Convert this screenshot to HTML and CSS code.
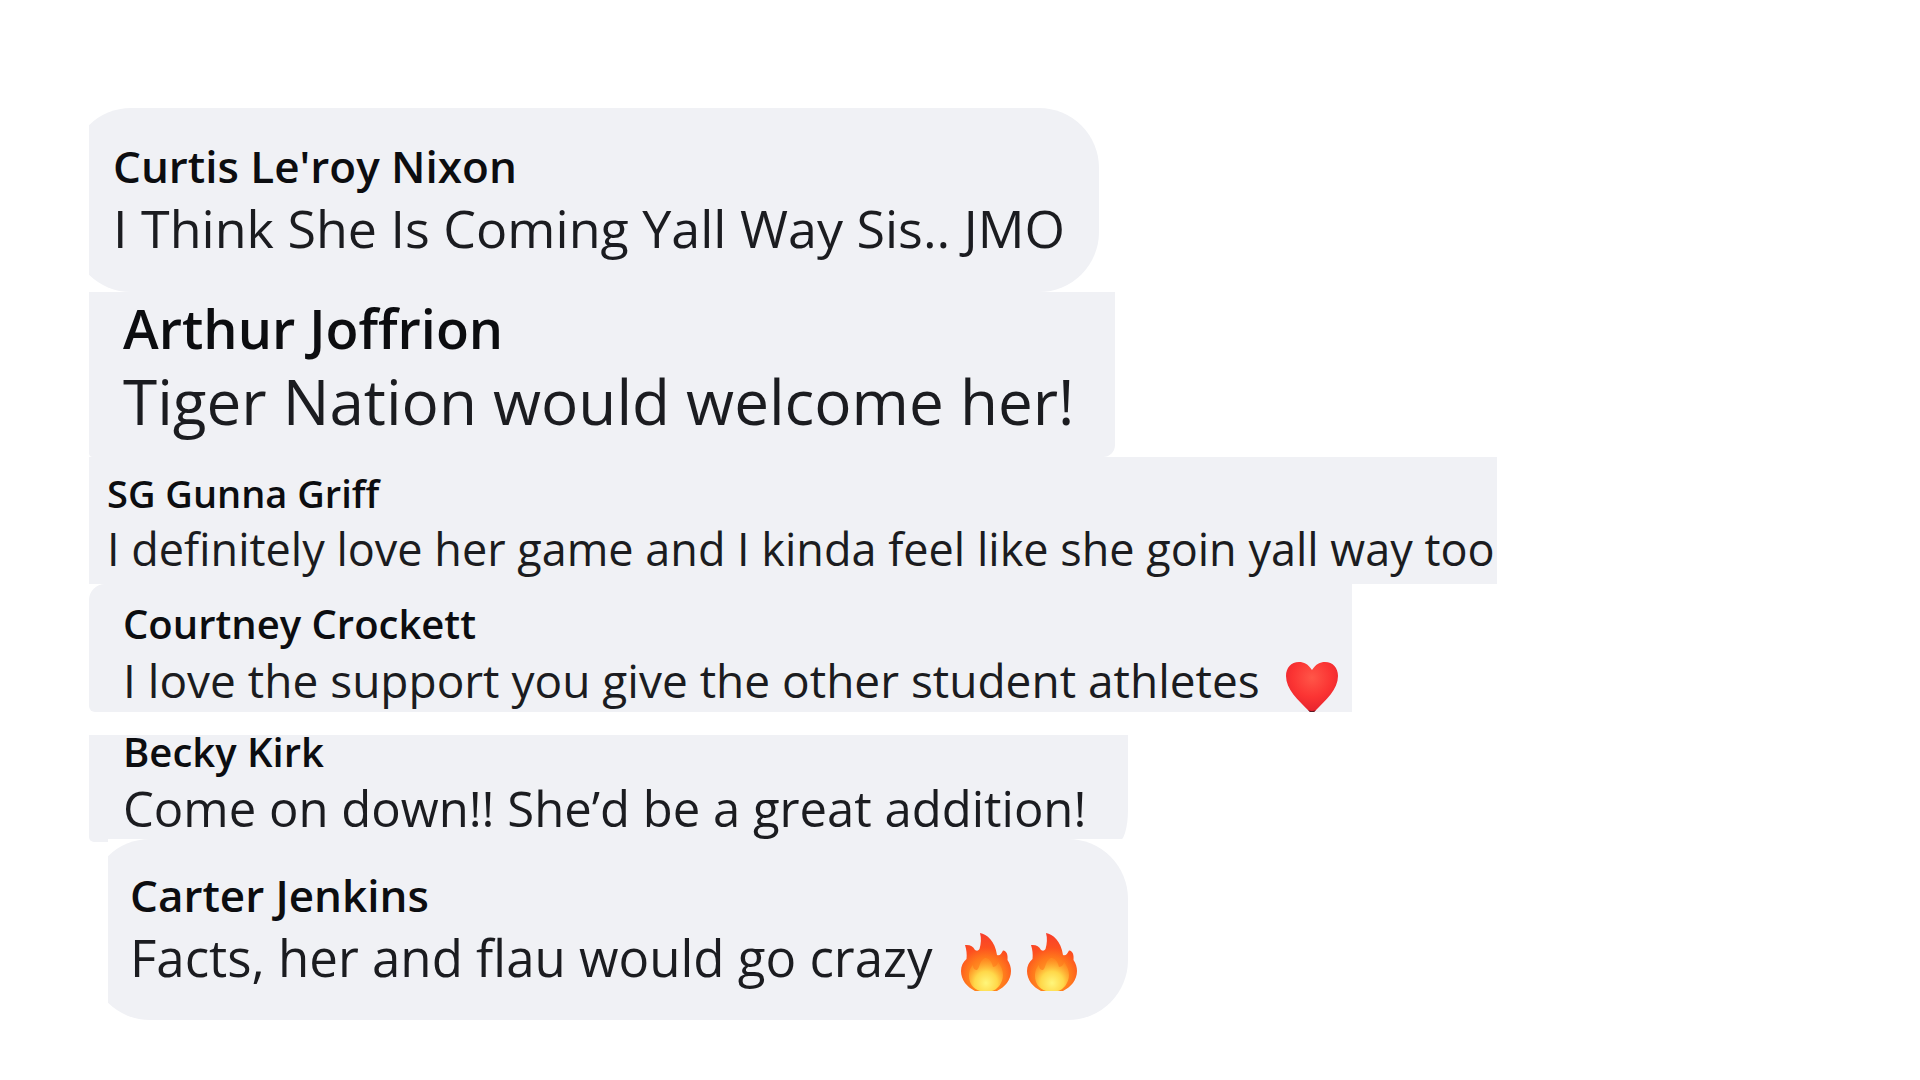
FILE: index.html
```html
<!DOCTYPE html>
<html lang="en">
<head>
<meta charset="utf-8">
<title>Comments</title>
<link rel="stylesheet" href="styles.css">
</head>
<body>
<svg class="defs" width="0" height="0" aria-hidden="true">
  <defs>
    <radialGradient id="heartFill" cx="50%" cy="30%" r="75%">
      <stop offset="0" stop-color="#ff5648"/>
      <stop offset="0.5" stop-color="#fb3433"/>
      <stop offset="1" stop-color="#e01d2b"/>
    </radialGradient>
    <radialGradient id="flameOuter" gradientUnits="userSpaceOnUse" cx="25" cy="44" r="42">
      <stop offset="0" stop-color="#ffb02e"/>
      <stop offset="0.45" stop-color="#ff7a1c"/>
      <stop offset="0.7" stop-color="#fd501f"/>
      <stop offset="1" stop-color="#f8402a"/>
    </radialGradient>
    <radialGradient id="flameInner" gradientUnits="userSpaceOnUse" cx="25" cy="50" r="23">
      <stop offset="0" stop-color="#fff67a"/>
      <stop offset="0.5" stop-color="#ffd84a"/>
      <stop offset="1" stop-color="#ffa52c" stop-opacity="0.3"/>
    </radialGradient>
    <symbol id="flame" viewBox="0 0 50 58">
      <path fill="url(#flameOuter)" d="M19 0C26 1 34 8 36 22C39 23 40 21 42 17.500C46 18 47 22 46.500 27C49 31 50 34 50 38C50 47 44 54 36 58H14C6 54 0 47 0 38C0 33 2 29 5.500 26C6 21 5.500 17 4 12C9 11.500 12 13 14 17C16 18 17 18 18.500 16C20 11 20.500 5 19 0Z"/>
      <path fill="url(#flameInner)" d="M24 25C28 25 31 29 32 34C35 34 37 31 37 29C40 33 42 37 42 42C42 50 36 57 31 58H19C12 56 8 50 8 43C8 37 10 34 12 32C12 36 14 37 16 37C19 35 18 28 24 25Z"/>
    </symbol>
  </defs>
</svg>
<main class="thread">
  <article class="comment comment-curtis">
    <div class="bubble">
      <h2 class="name">Curtis Le'roy Nixon</h2>
      <p class="text">I Think She Is Coming Yall Way Sis.. JMO</p>
    </div>
  </article>
  <article class="comment comment-arthur">
    <div class="bubble">
      <h2 class="name">Arthur Joffrion</h2>
      <p class="text">Tiger Nation would welcome her!</p>
    </div>
  </article>
  <article class="comment comment-griff">
    <div class="bubble">
      <h2 class="name">SG Gunna Griff</h2>
      <p class="text">I definitely love her game and I kinda feel like she goin yall way too</p>
    </div>
  </article>
  <article class="comment comment-courtney">
    <div class="bubble">
      <h2 class="name">Courtney Crockett</h2>
      <p class="text">I love the support you give the other student athletes
        <svg class="heart" viewBox="0 0 52 52" role="img" aria-label="red heart"><path fill="url(#heartFill)" d="M26 8C22 2 18 0 13 0C5 0 0 6 0 14C0 28 13 39 26 52C39 39 52 28 52 14C52 6 47 0 39 0C34 0 30 2 26 8Z"/><path fill="#5a1a26" d="M22 48L26 52L30 48Q26 50 22 48Z"/></svg></p>
    </div>
  </article>
  <article class="comment comment-becky">
    <div class="bubble">
      <h2 class="name">Becky Kirk</h2>
      <p class="text">Come on down!! She’d be a great addition!</p>
    </div>
  </article>
  <article class="comment comment-carter">
    <div class="bubble">
      <h2 class="name">Carter Jenkins</h2>
      <p class="text">Facts, her and flau would go crazy
        <span class="flames">
          <svg class="flame" role="img" aria-label="fire"><use href="#flame"/></svg>
          <svg class="flame" role="img" aria-label="fire"><use href="#flame"/></svg>
        </span></p>
    </div>
  </article>
</main>
</body>
</html>
```
FILE: styles.css
```css
* {
  box-sizing: border-box;
}

body {
  margin: 0;
  background: #fff;
  font-family: "Open Sans", "Noto Sans", sans-serif;
}

.defs {
  position: absolute;
}

.thread {
  display: flex;
  flex-direction: column;
  align-items: flex-start;
  padding: 108px 89px 60px;
}

.comment {
  overflow: hidden;
  background: #fff;
}

.bubble {
  overflow: hidden;
  background: #f0f1f5;
  white-space: nowrap;
}

.name,
.text {
  margin: 0;
}

.name {
  color: #0c0d10;
  font-weight: 600;
}

.text {
  display: flex;
  align-items: center;
  color: #1b1c20;
}

/* The round bubbles run past the left edge of their comment, which crops them. */
.comment-curtis .bubble,
.comment-carter .bubble {
  margin-left: -18px;
  border-radius: 60px;
  line-height: 62px;
}

.comment-curtis .bubble {
  padding: 27px 34px 33px 42px;
}

.comment-curtis .name,
.comment-carter .name {
  font-size: 44px;
}

.comment-curtis .text {
  font-size: 52px;
}

.comment-arthur .bubble {
  padding: 0 41px 19px 34px;
  border-radius: 0 0 12px 4px;
  line-height: 73px;
}

.comment-arthur .name {
  font-size: 54px;
}

.comment-arthur .text {
  font-size: 62px;
}

.comment-griff .bubble {
  padding: 9px 2px 8px 18px;
  line-height: 55px;
}

.comment-griff .name {
  font-size: 38px;
}

.comment-griff .text {
  font-size: 45px;
}

.comment-courtney .bubble {
  padding: 12px 14px 4px 34px;
  border-radius: 16px 0 0 6px;
  line-height: 56px;
}

.comment-courtney .name,
.comment-becky .name {
  font-size: 40px;
}

.comment-courtney .text {
  font-size: 46px;
  gap: 26px;
}

.heart {
  width: 52px;
  height: 52px;
  margin: 10px 0 -6px;
}

.comment-becky {
  margin-top: 23px;
}

.comment-becky .bubble {
  padding: 0 42px 5px 34px;
  border-radius: 0 0 10px 5px / 0 0 32px 5px;
  line-height: 57px;
}

.comment-becky .name {
  margin-top: -12px;
}

.comment-becky .text {
  font-size: 49px;
}

.comment-carter {
  z-index: 1;
  margin: -3px 0 0 19px;
}

.comment-carter .bubble {
  padding: 25px 51px 32px 40px;
}

.comment-carter .text {
  gap: 29px;
  font-size: 51px;
}

.flames {
  display: flex;
  gap: 16px;
}

.flame {
  width: 50px;
  height: 58px;
  margin: 5px 0 -5px;
}
```
